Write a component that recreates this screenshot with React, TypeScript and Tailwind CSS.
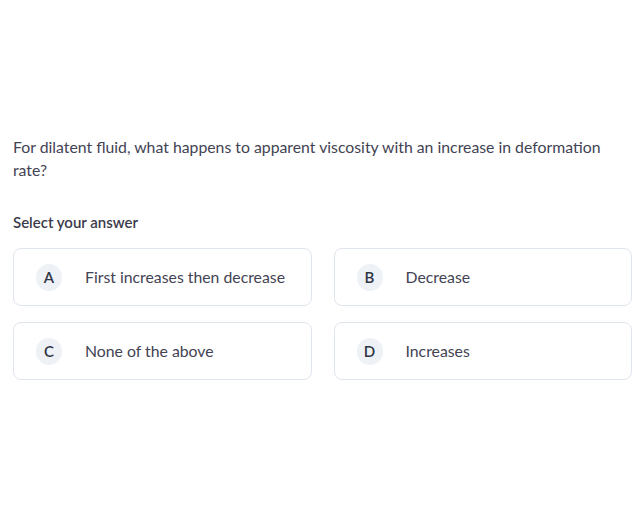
const OPTIONS = [
  { key: "A", text: "First increases then decrease" },
  { key: "B", text: "Decrease" },
  { key: "C", text: "None of the above" },
  { key: "D", text: "Increases" },
];

export default function App() {
  return (
    <main
      className="min-h-[530px] bg-white pt-[135px] pl-[13px]"
      style={{ fontFamily: "Lato, 'Open Sans', sans-serif" }}
    >
      <div className="w-[619px]">
        <p className="text-[15.8px] leading-[23px] text-[#434354]">
          For dilatent fluid, what happens to apparent viscosity with an
          increase in deformation rate?
        </p>
        <div className="mt-[30px] text-[15px] font-semibold leading-[22px] text-[#3a3a4a]">
          Select your answer
        </div>
        <div className="mt-[15px] grid grid-cols-2 gap-x-[22px] gap-y-[16px]">
          {OPTIONS.map((o) => (
            <button
              key={o.key}
              className="flex h-[58px] items-center gap-[23px] rounded-[8px] border border-[#dfe5ec] bg-white px-[22px] text-left"
            >
              <span className="flex h-[27px] w-[26px] shrink-0 items-center justify-center rounded-full bg-[#eef2f6] text-[15px] font-semibold text-[#2f3545]">
                {o.key}
              </span>
              <span className="text-[15.8px] text-[#434354]">{o.text}</span>
            </button>
          ))}
        </div>
      </div>
    </main>
  );
}
